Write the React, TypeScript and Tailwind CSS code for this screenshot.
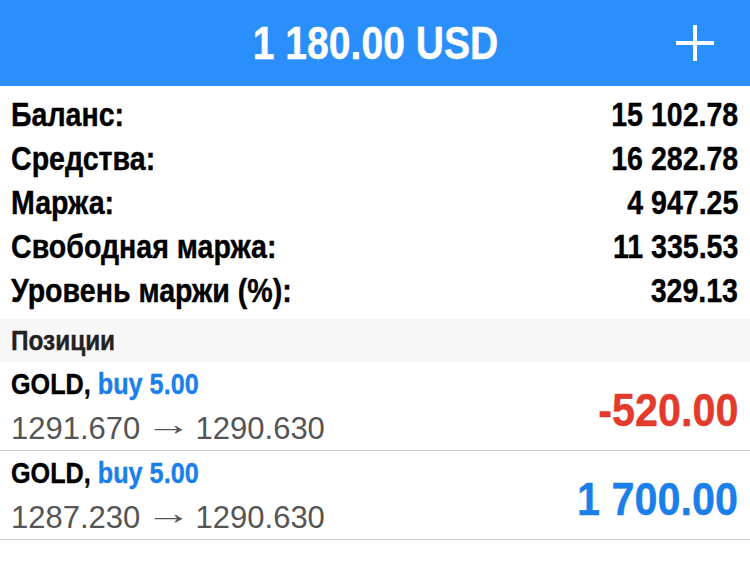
import React from "react";

const bold = "font-['Liberation_Sans',Arial,sans-serif] font-bold [-webkit-text-stroke:0.4px]";

function Row({ label, value }: { label: string; value: string }) {
  return (
    <div className="flex h-[44px] items-center justify-between">
      <span className={`${bold} inline-block origin-left scale-x-[0.84] whitespace-nowrap text-[34px] leading-none text-black`}>{label}</span>
      <span className={`${bold} inline-block origin-right scale-x-[0.84] whitespace-nowrap text-[34px] leading-none text-black`}>{value}</span>
    </div>
  );
}

function Position({ open, close, profit, color }: { open: string; close: string; profit: string; color: string }) {
  return (
    <div className="flex h-[89px] items-center justify-between border-b border-[#c8c8c8] pl-[11px] pr-[12px]">
      <div className="flex flex-col">
        <div className={`${bold} inline-block origin-left scale-x-[0.84] whitespace-nowrap text-[30px] leading-none`}>
          <span className="text-black">GOLD, </span>
          <span className="text-[#1a7fe8]">buy 5.00</span>
        </div>
        <div className="mt-[14px] whitespace-nowrap font-['Liberation_Sans',Arial,sans-serif] text-[31px] leading-none text-[#555]">
          {open}{" "}
          <span className="mx-[4px] inline-block w-[30px] -translate-y-[4px] scale-x-[1.5] text-center">→</span>{" "}
          {close}
        </div>
      </div>
      <div className={`${bold} mt-[6px] inline-block origin-right scale-x-[0.88] whitespace-nowrap text-[47px] leading-none ${color}`}>{profit}</div>
    </div>
  );
}

export default function App() {
  return (
    <div className="h-[579px] w-[750px] overflow-hidden bg-white">
      <div className="grid h-[86px] grid-cols-[1fr_auto_1fr] items-center bg-[#2b8ffb]">
        <div />
        <div className={`${bold} inline-block scale-x-[0.85] whitespace-nowrap text-[46px] leading-none text-white`}>1 180.00 USD</div>
        <div className="flex justify-end pr-[36px]">
          <svg width="38" height="36" viewBox="0 0 38 36" fill="none">
            <path d="M19 0V36M0 18H38" stroke="white" strokeWidth="4" />
          </svg>
        </div>
      </div>
      <div className="px-[11px] pb-[7px] pr-[12px] pt-[6px]">
        <Row label="Баланс:" value="15 102.78" />
        <Row label="Средства:" value="16 282.78" />
        <Row label="Маржа:" value="4 947.25" />
        <Row label="Свободная маржа:" value="11 335.53" />
        <Row label="Уровень маржи (%):" value="329.13" />
      </div>
      <div className="flex h-[43px] items-center bg-[#f7f7f7] px-[11px]">
        <span className={`${bold} inline-block origin-left scale-x-[0.87] whitespace-nowrap text-[28px] leading-none text-[#222]`}>Позиции</span>
      </div>
      <Position open="1291.670" close="1290.630" profit="-520.00" color="text-[#e33b2b]" />
      <Position open="1287.230" close="1290.630" profit="1 700.00" color="text-[#1a7fe8]" />
    </div>
  );
}
